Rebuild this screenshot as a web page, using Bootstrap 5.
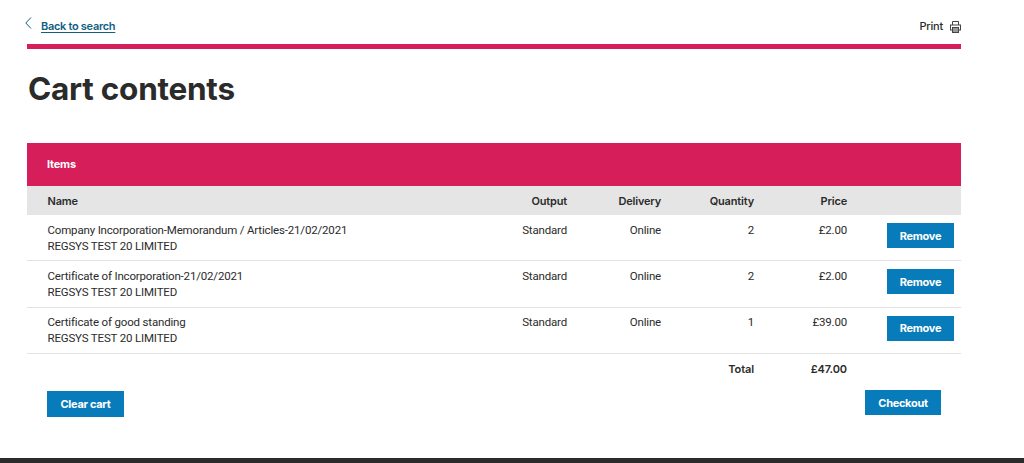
<!DOCTYPE html>
<html lang="en">
<head>
<meta charset="utf-8">
<title>Cart contents</title>
<link href="https://cdn.jsdelivr.net/npm/bootstrap@5.3.0/dist/css/bootstrap.min.css" rel="stylesheet">
<style>
html,body{height:463px;overflow:hidden}
body{font-family:"Roboto","Liberation Sans",sans-serif;color:#2b2b2b;font-size:11.5px;background:#fff;display:flex;flex-direction:column}
.page-wrap{width:934px;margin-left:27px;flex:1 1 auto}
.top-line{height:44px;padding-top:17px;border:0}
.back-link{color:#0f5e85;font-weight:600;font-size:11px;font-family:"Inter",sans-serif;letter-spacing:-.3px;text-underline-offset:2px;margin-top:-1px;padding-top:2px}
.back-link-wrap{margin-left:-2px;gap:9px}
.print-link{font-size:11px;font-weight:500;gap:7px;color:#2b2b2b;font-family:"Inter",sans-serif;letter-spacing:-.2px}
.print-link svg{margin-top:4px}
.print-text{padding-top:1px}
.pink-rule{height:5px;background:#d51e5a}
.page-title{font-size:31.5px;font-weight:700;line-height:40px;margin:20px 0 34px 1px;color:#2b2b2b;letter-spacing:-.25px;font-family:"Inter",sans-serif}
.items-head{background:#d51e5a;color:#fff;height:43px;padding:0 20px;font-weight:700;font-size:11px;line-height:43px;font-family:"Inter",sans-serif;letter-spacing:-.2px}
.cart-table{table-layout:fixed;width:934px;margin:0;font-size:11.5px;letter-spacing:-.17px}
.col-name{width:440px}
.col-output{width:100px}
.col-delivery{width:94px}
.col-qty,.col-price{width:93px}
.col-act{width:114px}
.cart-table th,.cart-table td{padding:7px 0 0;line-height:16px;color:#2b2b2b;border-bottom:1px solid #e3e3e3;vertical-align:top;background:transparent;box-shadow:none}
.cart-table thead th{background:#e5e5e5;border-bottom:0;font-weight:600;height:29px;padding:7px 0 6px;font-family:"Inter",sans-serif;font-size:11px;letter-spacing:-.17px}
.cart-table .first-col{padding-left:20.5px}
.row-a td{height:45px}
.row-b td{height:47px}
.row-c td{height:46px}
.cart-table .row-c td{padding-top:6px}
.row-c .remove-btn{margin-top:2px}
.cart-table tfoot td{border-bottom:0;font-weight:600;padding-top:7px;height:30px;font-family:"Inter",sans-serif;font-size:11px;letter-spacing:-.1px}
.action-btn{--bs-btn-bg:#087cba;--bs-btn-border-color:#087cba;--bs-btn-color:#fff;--bs-btn-hover-bg:#066a9f;--bs-btn-hover-color:#fff;border-radius:0;font-size:11px;font-weight:700;padding:0;line-height:23px;height:25px;border-width:1px;font-family:"Inter",sans-serif;letter-spacing:-.3px}
.remove-btn{width:67px;margin-top:1px;margin-left:40px;display:block;padding-top:1px}
.row-c .remove-btn{padding-top:0}
.action-row{padding:0 20px;align-items:flex-start}
.clear-btn{width:77px;height:26px;margin-top:8px}
.checkout-btn{width:76px;margin-top:7px;padding-top:1px}
.bottom-bar{height:5px;background:#2b2b2b;flex:0 0 5px}
</style>
</head>
<body>
<div class="page-wrap">
  <div class="top-line d-flex justify-content-between">
    <div class="back-link-wrap d-flex align-items-start">
      <svg width="7" height="12" viewBox="0 0 7 12" fill="none" stroke="#0f5e85" stroke-width="1"><path d="M6 .5.8 6 6 11.5"/></svg>
      <a href="#" class="back-link">Back to search</a>
    </div>
    <div class="print-link d-flex align-items-start">
      <span class="print-text">Print</span>
      <svg width="11" height="12" viewBox="0 0 11 12" fill="none" stroke="#444" stroke-width="1"><path d="M2.5 4V.5h6V4"/><rect x=".5" y="4" width="10" height="5"/><rect x="2.5" y="6.5" width="6" height="5" fill="#999"/></svg>
    </div>
  </div>
  <div class="pink-rule"></div>
  <h1 class="page-title">Cart contents</h1>
  <div class="items-head">Items</div>
  <table class="table cart-table">
    <colgroup><col class="col-name"><col class="col-output"><col class="col-delivery"><col class="col-qty"><col class="col-price"><col class="col-act"></colgroup>
    <thead>
      <tr><th class="first-col">Name</th><th class="text-end">Output</th><th class="text-end">Delivery</th><th class="text-end">Quantity</th><th class="text-end">Price</th><th></th></tr>
    </thead>
    <tbody>
      <tr class="row-a"><td class="first-col">Company Incorporation-Memorandum / Articles-21/02/2021<br>REGSYS TEST 20 LIMITED</td><td class="text-end">Standard</td><td class="text-end">Online</td><td class="text-end">2</td><td class="text-end">£2.00</td><td><button class="btn action-btn remove-btn">Remove</button></td></tr>
      <tr class="row-b"><td class="first-col">Certificate of Incorporation-21/02/2021<br>REGSYS TEST 20 LIMITED</td><td class="text-end">Standard</td><td class="text-end">Online</td><td class="text-end">2</td><td class="text-end">£2.00</td><td><button class="btn action-btn remove-btn">Remove</button></td></tr>
      <tr class="row-c"><td class="first-col">Certificate of good standing<br>REGSYS TEST 20 LIMITED</td><td class="text-end">Standard</td><td class="text-end">Online</td><td class="text-end">1</td><td class="text-end">£39.00</td><td><button class="btn action-btn remove-btn">Remove</button></td></tr>
    </tbody>
    <tfoot>
      <tr><td></td><td></td><td></td><td class="text-end">Total</td><td class="text-end">£47.00</td><td></td></tr>
    </tfoot>
  </table>
  <div class="d-flex justify-content-between action-row">
    <button class="btn action-btn clear-btn">Clear cart</button>
    <button class="btn action-btn checkout-btn">Checkout</button>
  </div>
</div>
<div class="bottom-bar"></div>
<script src="https://cdn.jsdelivr.net/npm/bootstrap@5.3.0/dist/js/bootstrap.bundle.min.js"></script>
</body>
</html>
